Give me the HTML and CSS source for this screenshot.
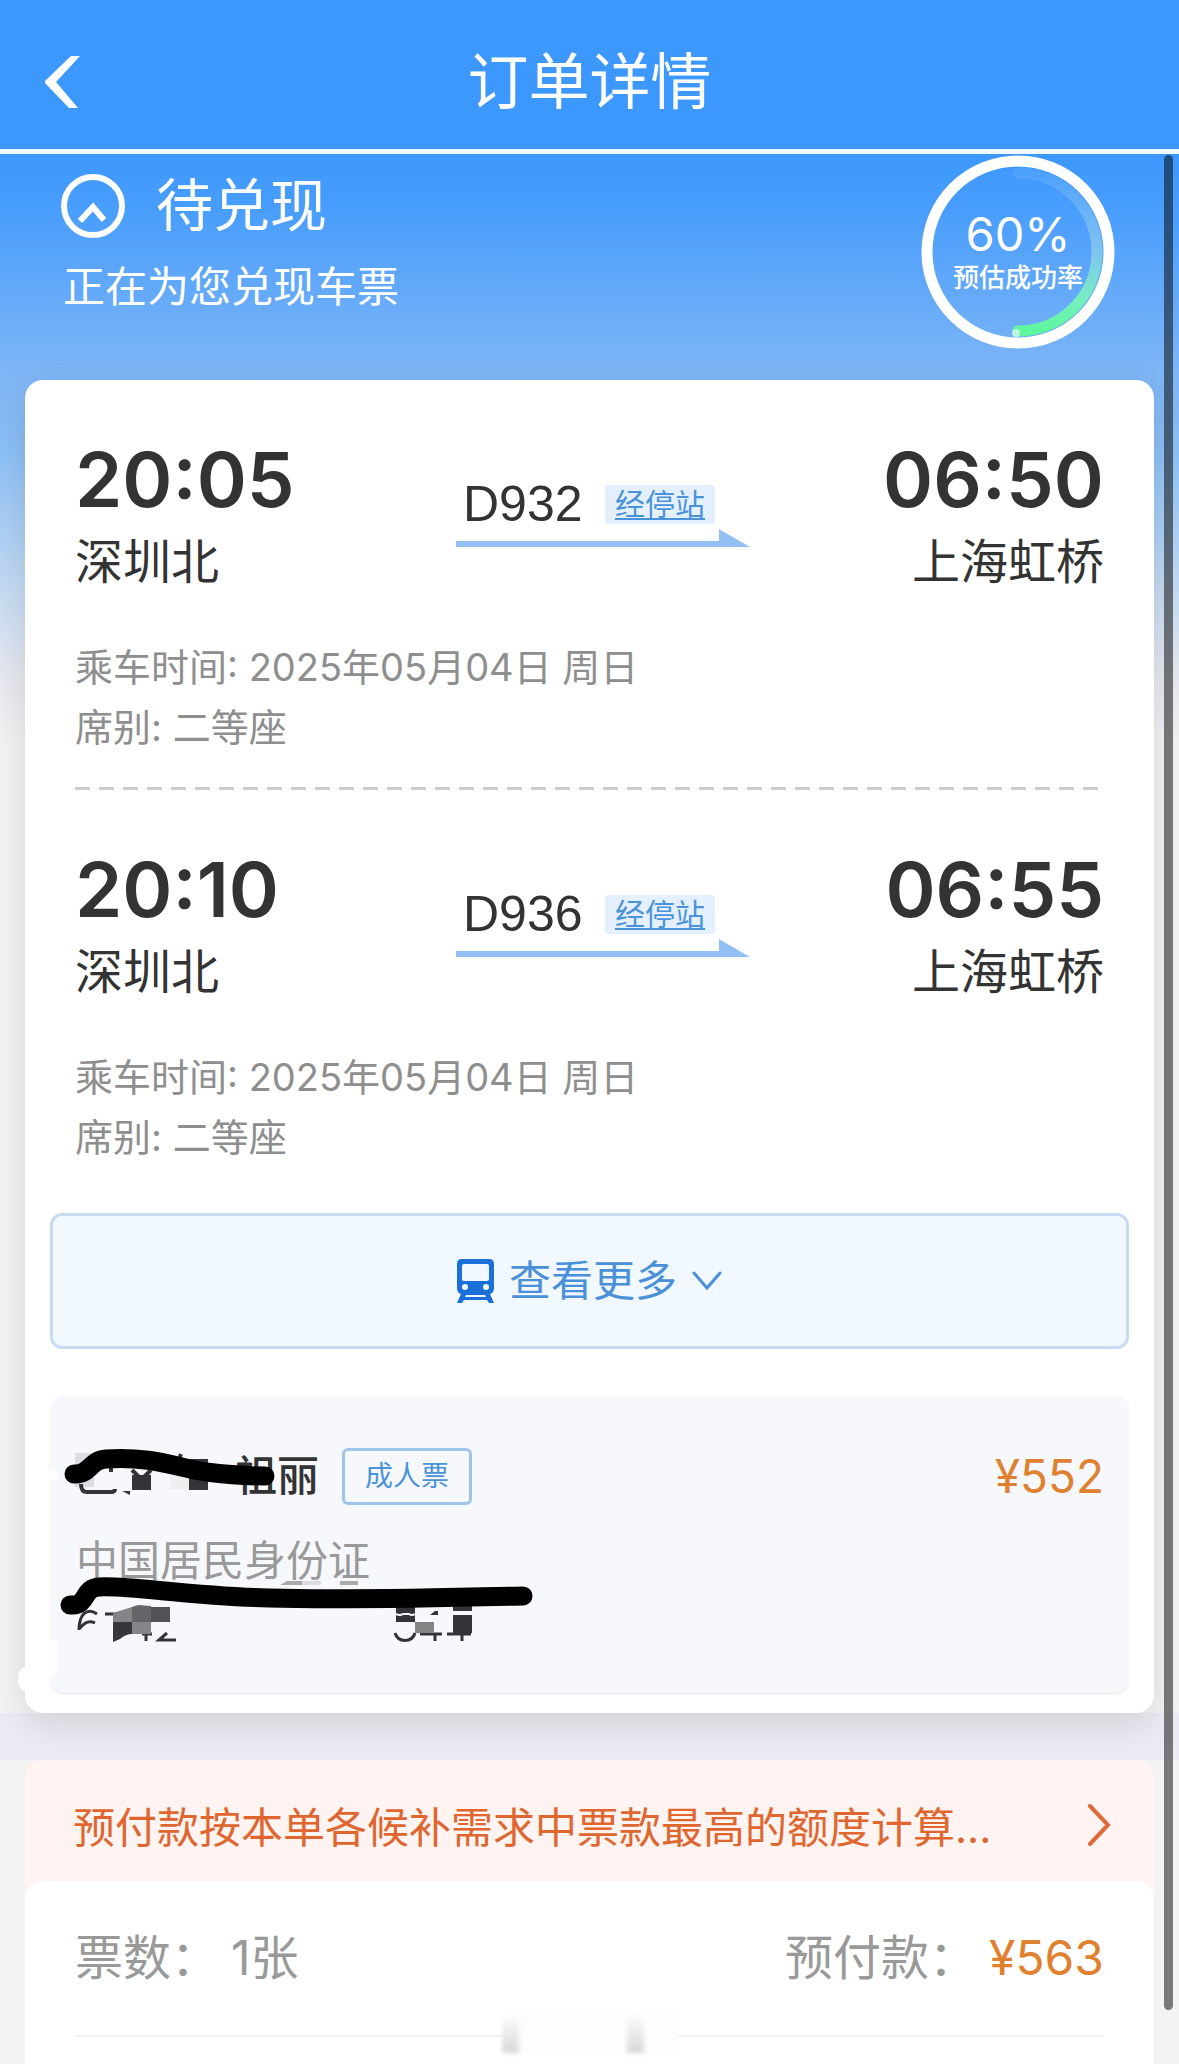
FILE: index.html
```html
<!DOCTYPE html>
<html lang="zh-CN">
<head>
<meta charset="utf-8">
<meta name="viewport" content="width=device-width, initial-scale=1">
<title>订单详情</title>
<link rel="stylesheet" href="styles.css">
</head>
<body>
<header class="topbar">
  <button class="back" type="button" aria-label="返回">
    <svg width="36" height="52" viewBox="0 0 36 52" aria-hidden="true"><path d="M26 0h9L11 26l22 26h-9L0 27v-2z" fill="#fff"/></svg>
  </button>
  <h1 class="topbar-title">订单详情</h1>
</header>

<main class="page">
  <section class="status">
    <div class="status-text">
      <h2 class="status-title">
        <svg width="66" height="66" viewBox="0 0 66 66" fill="none" stroke="#fff" aria-hidden="true"><circle cx="33" cy="33" r="29" stroke-width="6"/><path d="M20 48l13-14 11 13" stroke-width="6"/></svg>
        待兑现
      </h2>
      <p class="status-note">正在为您兑现车票</p>
    </div>
    <div class="ring">
      <svg class="ring-art" width="194" height="194" viewBox="0 0 194 194" fill="none" aria-hidden="true">
        <defs><linearGradient id="rate" x1="0" y1="0" x2="0" y2="1"><stop offset="0" stop-color="#7fbcf8" stop-opacity=".2"/><stop offset=".5" stop-color="#7fc4f0"/><stop offset=".8" stop-color="#77eec0"/><stop offset="1" stop-color="#5ef79c"/></linearGradient></defs>
        <path d="M97 18A79 79 0 0 1 97 176" stroke="url(#rate)" stroke-width="11" stroke-linecap="round"/>
        <circle cx="97" cy="97" r="91" stroke="#fff" stroke-width="11"/>
        <circle cx="95" cy="178" r="4" fill="#b9f7e4"/>
      </svg>
      <div class="ring-text"><strong class="ring-value">60%</strong><span class="ring-label">预估成功率</span></div>
    </div>
  </section>

  <section class="card">
    <article class="train">
      <div class="route">
        <div class="stop"><time class="clock">20:05</time><span class="station">深圳北</span></div>
        <div class="middle">
          <div class="number"><span>D932</span><a class="via" href="#stops">经停站</a></div>
          <svg class="arrow" width="294" height="20" viewBox="0 0 294 20" aria-hidden="true"><path d="M0 13h263V1l31 18H0z" fill="#92c0f2"/></svg>
        </div>
        <div class="stop stop-end"><time class="clock">06:50</time><span class="station">上海虹桥</span></div>
      </div>
      <p class="detail">乘车时间: 2025年05月04日 周日</p>
      <p class="detail">席别: 二等座</p>
    </article>
    <div class="dashes"></div>
    <article class="train">
      <div class="route">
        <div class="stop"><time class="clock">20:10</time><span class="station">深圳北</span></div>
        <div class="middle">
          <div class="number"><span>D936</span><a class="via" href="#stops">经停站</a></div>
          <svg class="arrow" width="294" height="20" viewBox="0 0 294 20" aria-hidden="true"><path d="M0 13h263V1l31 18H0z" fill="#92c0f2"/></svg>
        </div>
        <div class="stop stop-end"><time class="clock">06:55</time><span class="station">上海虹桥</span></div>
      </div>
      <p class="detail">乘车时间: 2025年05月04日 周日</p>
      <p class="detail">席别: 二等座</p>
    </article>

    <button class="more" type="button">
      <svg width="37" height="44" viewBox="0 0 37 44" aria-hidden="true"><path fill="#1a6fd8" fill-rule="evenodd" d="M5 0h27q5 0 5 5v24q0 5-4 6l4 9h-5l-2-3H7l-2 3H0l4-9q-4-1-4-6V5q0-5 5-5zM7 5q-2 0-2 2v13q0 2 2 2h23q2 0 2-2V7q0-2-2-2zM8 25a3 3 0 1 0 0 6a3 3 0 1 0 0-6zM29 25a3 3 0 1 0 0 6a3 3 0 1 0 0-6zM9 36l-1 2h21l-1-2z"/></svg>
      <span>查看更多</span>
      <svg width="30" height="20" viewBox="0 0 30 20" fill="none" stroke="#4a90d9" stroke-width="3" stroke-linecap="round" aria-hidden="true"><path d="M2 2l13 15L28 2"/></svg>
    </button>

    <section class="passenger">
      <div class="passenger-row">
        <span class="name">祖丽</span><span class="ticket-type">成人票</span><span class="price">¥552</span>
      </div>
      <p class="id-type">中国居民身份证</p>
      <svg class="redaction" width="500" height="297" viewBox="0 0 500 297" fill="none" aria-hidden="true">
        <g fill="#fff"><path d="M0 244h7v33q-7 2-7 10q-3 8-14 8h-9q-9 0-9-12t9-12h16z"/><circle cx="3" cy="79" r="5"/></g>
        <g fill="#dcdde0"><path d="M25 57h19v34H25zM252 185h19v4h-19z"/></g>
        <path fill="#eeeff1" d="M120 76h19v17h-19z"/>
        <path fill="#333437" d="M82 79h19v15H82zM139 63h19v31h-19zM72 95l8 4v-4zM346 210h19v16h-19zM403 210h19v5h-19zM403 219h19v18h-19zM380 219l5-4h3v4z"/>
        <path stroke="#333437" stroke-width="4" d="M31 88q0 8 6 8h24q4 0 4-3M61 66v10M82 74l7 7M101 74l-7 7M131 58l-5 12"/>
        <path stroke="#333437" stroke-width="3" d="M29 234c0-16 8-23 18-16M30 232q7-9 15-5M55 218h15M92 238h10M96 237v8M117 237l-8 7h17M345 237c3 10 17 10 20 0M370 238h22M385 237v8M397 238h24M412 237v8"/>
        <path fill="#aaa" d="M230 189l7-4h15v4zM290 185h18v4h-18z"/>
        <path fill="#848587" d="M63 217l19-6v15H63zM82 226h19v12H82zM365 226h19v11h-19z"/>
        <path fill="#646568" d="M82 211l6-2 13 1v16H82z"/>
        <path fill="#515255" d="M101 211h19v15h-19z"/>
        <path fill="#36373a" d="M63 226h19v12q-6 0-12 5l-7 3z"/>
        <path stroke="#f7f8fc" stroke-width="2" d="M346 218q4 2 7 0h6q3 2 6 0"/>
        <path stroke="#000" stroke-width="19" stroke-linecap="round" stroke-linejoin="round" d="M24 78h2c14 0 14-14 30-15 45-3 70 8 100 13 16 2 40 4 59 4M20 209h3c14 0 10-17 26-18 30-2 90 9 170 11 60 2 170 0 254-2"/>
      </svg>
    </section>
  </section>

  <div class="spacer"></div>

  <section class="payment">
    <a class="notice" href="#deposit">
      <span>预付款按本单各候补需求中票款最高的额度计算...</span>
      <svg width="24" height="42" viewBox="0 0 24 42" fill="none" stroke="#e06a3c" stroke-width="4" stroke-linecap="round" aria-hidden="true"><path d="M3 2l18 19L3 40"/></svg>
    </a>
    <div class="totals">
      <div class="totals-row">
        <span class="pair"><span>票数：</span><span>1张</span></span>
        <span class="pair"><span>预付款：</span><span class="price">¥563</span></span>
      </div>
      <div class="toast-trace"><i class="trace"></i><i class="trace"></i></div>
    </div>
  </section>
  <div class="scroll-thumb"></div>
</main>
</body>
</html>
```
FILE: styles.css
```css
* { box-sizing: border-box; }

body {
  margin: 0;
  min-height: 100vh;
  display: flex;
  flex-direction: column;
  background: #f3f3f3;
  color: #333;
  font-family: Inter, "Noto Sans CJK SC", sans-serif;
}

h1, h2, p { margin: 0; font-weight: 400; }
a { color: inherit; text-decoration: none; }
button { font: inherit; color: inherit; border: 0; padding: 0; background: none; }
svg { display: block; flex: none; }

.topbar {
  display: grid;
  grid-template-columns: 81px 1fr 81px;
  align-items: center;
  height: 154px;
  padding: 14px 0 0;
  border-bottom: 5px solid #eef8ff;
  background: #3c98fd;
  color: #fff;
}
.back { justify-self: end; }
.topbar-title { text-align: center; font-size: 61px; line-height: 84px; }

.page {
  position: relative;
  flex: 1;
  display: flex;
  flex-direction: column;
  background: linear-gradient(#3c98fd 0, #4a9efc 60px, #80b6f6 226px, #8dc0f6 300px, #c3daf3 430px, #e6e8f0 520px, #f3f3f3 590px);
}

.status {
  display: flex;
  justify-content: space-between;
  height: 226px;
  padding: 1px 64px 0 60px;
  color: #fff;
}
.status-text { padding-top: 16px; }
.status-title { display: flex; align-items: center; gap: 30px; font-size: 57px; line-height: 70px; }
.status-note { margin-top: 16px; padding-left: 3px; font-size: 42px; line-height: 60px; }

.ring { display: grid; width: 194px; height: 194px; }
.ring-art, .ring-text { grid-area: 1 / 1; }
.ring-text { display: flex; flex-direction: column; align-items: center; padding-top: 52px; }
.ring-value { font-size: 47px; font-weight: 400; line-height: 54px; }
.ring-label { font-size: 26px; font-weight: 500; line-height: 34px; }

.card {
  position: relative;
  z-index: 1;
  margin: 0 25px;
  padding: 54px 25px 20px;
  border-radius: 18px;
  background: #fff;
  box-shadow: 0 10px 36px rgba(0, 0, 0, .12);
}
.train { padding: 0 25px; }
.route { display: grid; grid-template-columns: 381fr 294px 354fr; }
.stop { display: flex; flex-direction: column; }
.stop-end { align-items: flex-end; }
.clock { font-size: 76px; font-weight: 600; line-height: 90px; }
.station { padding-top: 3px; font-size: 48px; line-height: 70px; }
.middle { padding-top: 46px; }
.number {
  display: flex;
  align-items: center;
  justify-content: space-between;
  padding: 0 35px 0 7px;
  font-family: "Liberation Sans", Arial, "Noto Sans CJK SC", sans-serif;
  font-size: 50px;
  line-height: 48px;
}
.via {
  padding: 0 10px;
  border-radius: 3px;
  background: #e4f0fd;
  color: #4b93d9;
  font-size: 30px;
  line-height: 39px;
  text-decoration: underline;
  text-decoration-thickness: 2px;
  text-underline-offset: 3px;
}
.detail { color: #8e8e8e; font-size: 38px; line-height: 60px; }
.route + .detail { margin-top: 40px; }
.dashes {
  height: 3px;
  margin: 30px 25px 54px;
  background: repeating-linear-gradient(90deg, #ccc 0 15px, transparent 15px 24px);
}

.more {
  display: flex;
  align-items: center;
  justify-content: center;
  gap: 15px;
  width: 100%;
  height: 136px;
  margin-top: 46px;
  border: 3px solid #c8dcf1;
  border-radius: 12px;
  background: #f1f8ff;
  color: #4a90d9;
  font-size: 42px;
  line-height: 60px;
}

.passenger {
  position: relative;
  margin-top: 47px;
  padding: 50px 25px 102px 26px;
  border-radius: 14px;
  background: #f7f8fc;
  box-shadow: 0 1px 2px rgba(0, 0, 0, .1);
}
.passenger-row { display: flex; align-items: center; height: 60px; line-height: 58px; }
.name { padding-left: 159px; font-size: 42px; font-weight: 500; }
.ticket-type {
  margin-left: 23px;
  padding: 0 20px;
  border: 3px solid #9fc4ea;
  border-radius: 6px;
  color: #4b93d9;
  font-size: 28px;
  line-height: 51px;
}
.price { color: #e0812f; font-size: 48px; }
.passenger-row .price { margin-left: auto; font-size: 46px; }
.id-type { margin-top: 25px; color: #999; font-size: 42px; line-height: 60px; }
.redaction { position: absolute; left: 0; top: 0; overflow: visible; }

.spacer { height: 47px; background: #ecebf3; }

.payment {
  flex: 1;
  display: flex;
  flex-direction: column;
  margin: 0 25px;
  border-radius: 18px 18px 0 0;
  background: #fff4f1;
}
.notice {
  display: flex;
  align-items: center;
  justify-content: space-between;
  height: 121px;
  padding: 8px 43px 0 48px;
  color: #e0662f;
  font-size: 42px;
}
.totals { flex: 1; padding: 41px 50px 0; border-radius: 18px 18px 0 0; background: #fff; }
.totals-row {
  display: flex;
  justify-content: space-between;
  height: 115px;
  border-bottom: 2px solid #f1f1f1;
  color: #999;
  font-size: 48px;
  line-height: 72px;
}
.pair { display: flex; gap: 12px; }

/* bottom of a fading toast, over the divider */
.toast-trace {
  display: flex;
  gap: 108px;
  width: 176px;
  height: 38px;
  margin: -22px auto 0;
  background: #fdfdfd;
}
.trace { width: 17px; background: linear-gradient(#fdfdfd, #d8d8d8); filter: blur(2px); }

.scroll-thumb {
  position: absolute;
  z-index: 2;
  top: 1px;
  right: 6px;
  bottom: 54px;
  width: 9px;
  border-radius: 5px;
  background: rgba(0, 0, 0, .5);
}
```
